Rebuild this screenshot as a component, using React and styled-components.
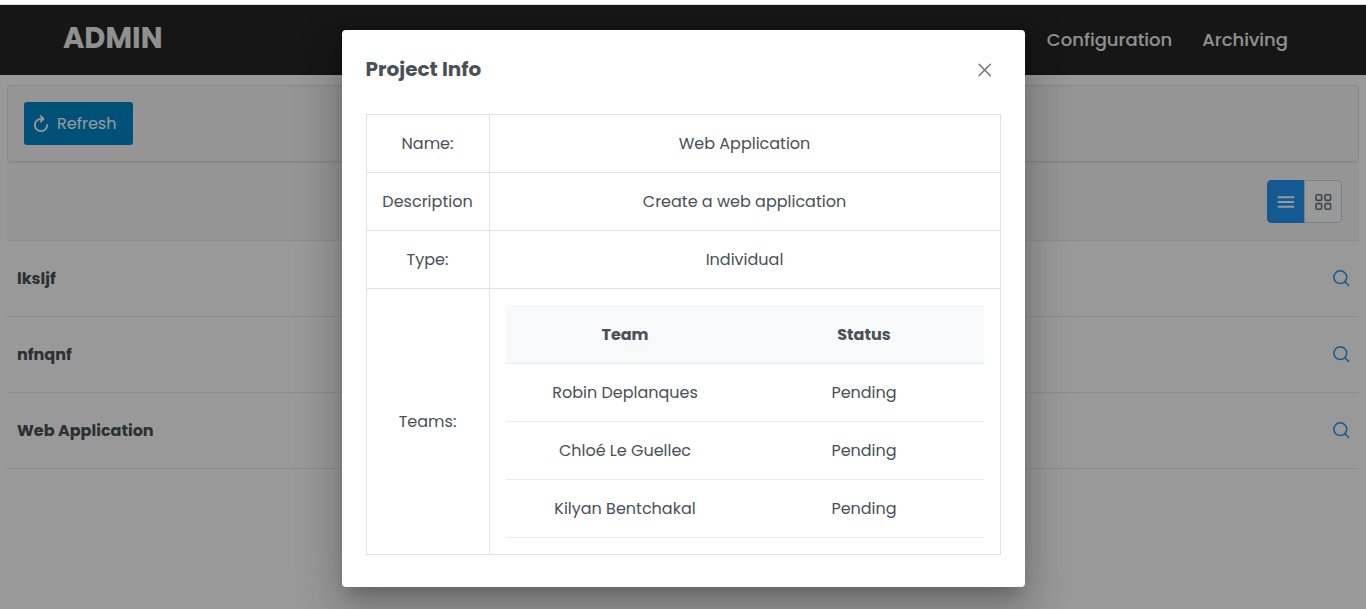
import React from "react";
import styled, { createGlobalStyle, css } from "styled-components";

const GlobalStyle = createGlobalStyle`
  * { box-sizing: border-box; }
  body {
    margin: 0;
    background: #ffffff;
    color: #495057;
    font-family: Poppins, Inter, "Open Sans", sans-serif;
    font-size: 16px;
    line-height: 24px;
  }
  button { font: inherit; cursor: pointer; }
`;

const TopEdge = styled.div`
  height: 5px;
  background: #ffffff;
  border-bottom: 1px solid #dcdcdc;
`;

const Screen = styled.div`
  position: relative;
  min-height: calc(100vh - 5px);
  overflow: hidden;
`;

const NavBar = styled.header`
  display: flex;
  align-items: center;
  justify-content: space-between;
  height: 70px;
  padding: 0 78px 0 63px;
  background: #262626;
`;

const Brand = styled.a`
  padding-bottom: 4px;
  color: #f0f0f0;
  font-size: 29px;
  font-weight: 700;
  line-height: 40px;
  text-decoration: none;
`;

const NavLinks = styled.nav`
  display: flex;
  gap: 30px;
`;

const NavLink = styled.a`
  color: #f0f0f0;
  font-size: 18px;
  font-weight: 500;
  text-decoration: none;
`;

const Content = styled.main`
  padding: 10px 7px;
`;

const Toolbar = styled.div`
  display: flex;
  align-items: center;
  padding: 16px;
  background: #f8f9fa;
  border: 1px solid #dee2e6;
  border-radius: 4px;
`;

const RefreshButton = styled.button`
  display: flex;
  align-items: center;
  gap: 8px;
  height: 43px;
  padding: 0 17px 0 9px;
  color: #ffffff;
  background: #0088cc;
  border: 0;
  border-radius: 3px;
`;

const ListHeader = styled.div`
  display: flex;
  justify-content: flex-end;
  padding: 17px;
  background: #f8f9fa;
  border: solid #e9ecef;
  border-width: 1px 0;
`;

const ViewButton = styled.button`
  display: grid;
  place-items: center;
  width: 38px;
  height: 43px;
  padding: 0;
  color: #6c757d;
  background: #ffffff;
  border: 1px solid #ced4da;
  border-radius: 0 4px 4px 0;
  ${(p) =>
    p.$active &&
    css`
      width: 37px;
      color: #ffffff;
      background: #2196f3;
      border-color: #2196f3;
      border-radius: 4px 0 0 4px;
    `}
`;

const ProjectList = styled.ul`
  margin: 0;
  padding: 0;
  list-style: none;
`;

const ProjectRow = styled.li`
  display: flex;
  align-items: center;
  justify-content: space-between;
  height: 76px;
  padding: 0 0 0 10px;
  border-bottom: 1px solid #e9ecef;
  font-weight: 700;
`;

const IconButton = styled.button`
  display: grid;
  place-items: center;
  width: ${(p) => p.$size}px;
  height: ${(p) => p.$size}px;
  padding: 0;
  color: ${(p) => p.$color};
  background: transparent;
  border: 0;
`;

const Overlay = styled.div`
  position: absolute;
  inset: 0;
  display: flex;
  align-items: flex-start;
  justify-content: center;
  padding-top: 25px;
  background: rgba(0, 0, 0, 0.4);
`;

const Dialog = styled.section`
  width: 50%;
  padding: 24px 24px 32px;
  background: #ffffff;
  border-radius: 4px;
  box-shadow:
    0 11px 15px -7px rgba(0, 0, 0, 0.2),
    0 24px 38px 3px rgba(0, 0, 0, 0.14),
    0 9px 46px 8px rgba(0, 0, 0, 0.12);
`;

const DialogHeader = styled.div`
  display: flex;
  align-items: flex-start;
  justify-content: space-between;
  margin-bottom: 28px;
`;

const DialogTitle = styled.h2`
  margin: 0;
  font-size: 20px;
  font-weight: 700;
  line-height: 30px;
`;

const InfoTable = styled.table`
  width: 100%;
  border-collapse: collapse;
  text-align: center;
`;

const InfoLabel = styled.th`
  width: 123px;
  height: 58px;
  padding: 0;
  border: 1px solid #dee2e6;
  font-weight: 400;
`;

const InfoValue = styled.td`
  padding: ${(p) => (p.$nested ? "16px" : "0")};
  border: 1px solid #dee2e6;
`;

const TeamTable = styled.table`
  width: 100%;
  border-collapse: separate;
  border-spacing: 0;
  table-layout: fixed;
`;

const TeamHead = styled.th`
  height: 59px;
  padding: 18px 0 16px;
  background: #f8f9fa;
  border-bottom: 1px solid #e9ecef;
  font-weight: 700;
`;

const TeamCell = styled.td`
  height: 58px;
  padding: 0;
  border-bottom: 1px solid #e9ecef;
`;

const RefreshIcon = () => (
  <svg width="16" height="18" viewBox="0 0 16 18" fill="none" stroke="currentColor" strokeWidth="1.8" strokeLinecap="round" strokeLinejoin="round" aria-hidden="true">
    <path d="M14.2 10a6.2 6.2 0 1 1-6.2-6.2h2.2" />
    <path d="M7.8 1.2l2.7 2.6-2.7 2.7" />
  </svg>
);

const BarsIcon = () => (
  <svg width="18" height="18" viewBox="0 0 18 18" stroke="currentColor" strokeWidth="1.9" strokeLinecap="round" aria-hidden="true">
    <path d="M1.5 4.3h15M1.5 9h15M1.5 13.7h15" />
  </svg>
);

const GridIcon = () => (
  <svg width="18" height="18" viewBox="0 0 18 18" fill="none" stroke="currentColor" strokeWidth="1.6" aria-hidden="true">
    <rect x="2" y="1.8" width="5.6" height="5.6" rx="1.2" />
    <rect x="11" y="1.8" width="5.6" height="5.6" rx="1.2" />
    <rect x="2" y="10.6" width="5.6" height="5.6" rx="1.2" />
    <rect x="11" y="10.6" width="5.6" height="5.6" rx="1.2" />
  </svg>
);

const SearchIcon = () => (
  <svg width="18" height="18" viewBox="0 0 18 18" fill="none" stroke="currentColor" strokeWidth="1.5" strokeLinecap="round" aria-hidden="true">
    <circle cx="8.3" cy="7.2" r="6.4" />
    <path d="M13 11.9l3.7 3.6" />
  </svg>
);

const CloseIcon = () => (
  <svg width="16" height="16" viewBox="0 0 16 16" stroke="currentColor" strokeWidth="1.5" strokeLinecap="round" aria-hidden="true">
    <path d="M2 2.3l11.4 11.4M13.4 2.3L2 13.7" />
  </svg>
);

const projects = ["lksljf", "nfnqnf", "Web Application"];
const details = [
  ["Name:", "Web Application"],
  ["Description", "Create a web application"],
  ["Type:", "Individual"],
];
const teams = [
  ["Robin Deplanques", "Pending"],
  ["Chloé Le Guellec", "Pending"],
  ["Kilyan Bentchakal", "Pending"],
];

export default function App() {
  return (
    <>
      <GlobalStyle />
      <TopEdge />
      <Screen>
        <NavBar>
          <Brand href="#">ADMIN</Brand>
          <NavLinks>
            <NavLink href="#configuration">Configuration</NavLink>
            <NavLink href="#archiving">Archiving</NavLink>
          </NavLinks>
        </NavBar>
        <Content>
          <Toolbar>
            <RefreshButton type="button">
              <RefreshIcon />
              Refresh
            </RefreshButton>
          </Toolbar>
          <ListHeader>
            <ViewButton type="button" $active aria-label="List view" aria-pressed="true">
              <BarsIcon />
            </ViewButton>
            <ViewButton type="button" aria-label="Grid view" aria-pressed="false">
              <GridIcon />
            </ViewButton>
          </ListHeader>
          <ProjectList>
            {projects.map((name) => (
              <ProjectRow key={name}>
                {name}
                <IconButton type="button" $size={36} $color="#2196f3" aria-label={`View ${name}`}>
                  <SearchIcon />
                </IconButton>
              </ProjectRow>
            ))}
          </ProjectList>
        </Content>
        <Overlay>
          <Dialog role="dialog" aria-modal="true" aria-labelledby="project-info-title">
            <DialogHeader>
              <DialogTitle id="project-info-title">Project Info</DialogTitle>
              <IconButton type="button" $size={32} $color="#6c757d" aria-label="Close">
                <CloseIcon />
              </IconButton>
            </DialogHeader>
            <InfoTable>
              <tbody>
                {details.map(([label, value]) => (
                  <tr key={label}>
                    <InfoLabel scope="row">{label}</InfoLabel>
                    <InfoValue>{value}</InfoValue>
                  </tr>
                ))}
                <tr>
                  <InfoLabel scope="row">Teams:</InfoLabel>
                  <InfoValue $nested>
                    <TeamTable>
                      <thead>
                        <tr>
                          <TeamHead scope="col">Team</TeamHead>
                          <TeamHead scope="col">Status</TeamHead>
                        </tr>
                      </thead>
                      <tbody>
                        {teams.map(([team, status]) => (
                          <tr key={team}>
                            <TeamCell>{team}</TeamCell>
                            <TeamCell>{status}</TeamCell>
                          </tr>
                        ))}
                      </tbody>
                    </TeamTable>
                  </InfoValue>
                </tr>
              </tbody>
            </InfoTable>
          </Dialog>
        </Overlay>
      </Screen>
    </>
  );
}
